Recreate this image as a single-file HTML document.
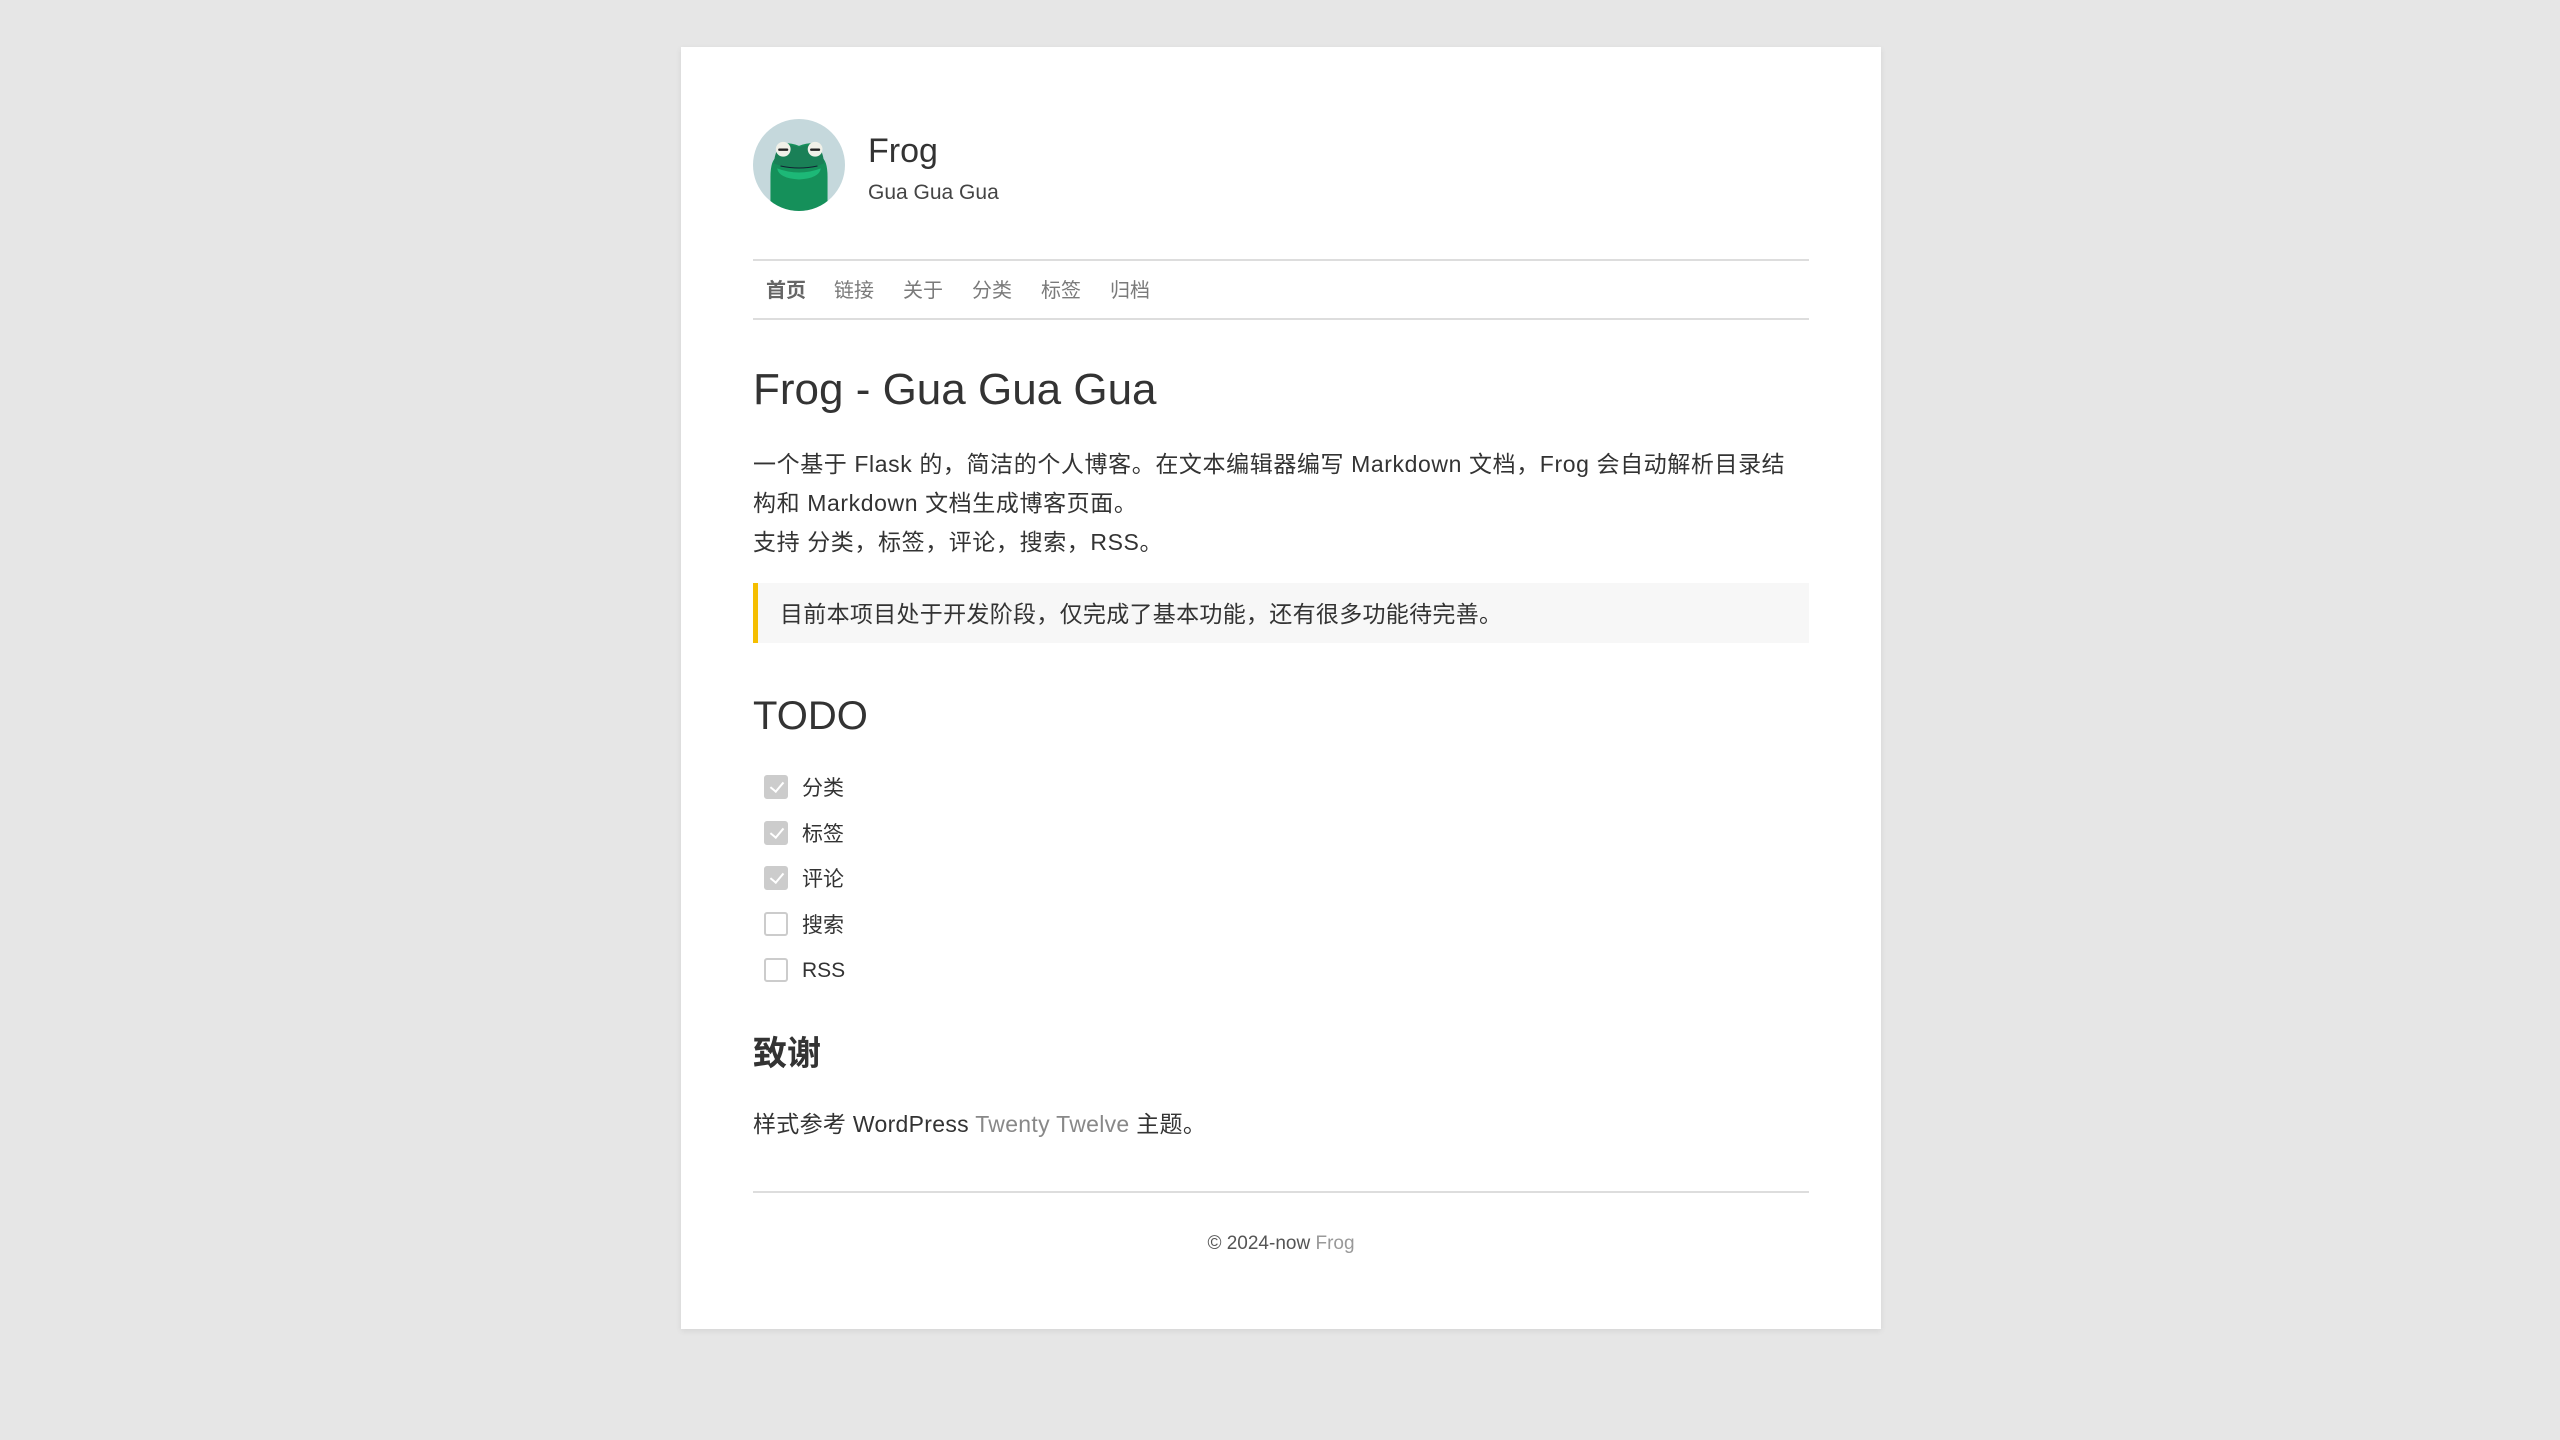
<!DOCTYPE html>
<html><head><meta charset="utf-8"><style>
html,body{margin:0;padding:0}
body{background:#e6e6e6;width:2560px;height:1440px;position:relative;font-family:"Liberation Sans","Noto Sans CJK SC",sans-serif;color:#333}
.card{position:absolute;left:681px;top:47px;width:1200px;height:1282px;background:#fff;box-shadow:0 2px 6px rgba(0,0,0,.08)}
.a{position:absolute;white-space:nowrap}
.nav span{position:absolute;top:0;font-size:20px;color:#7a7a7a}
.cb{position:absolute;left:83px;border:2px solid #ccc;border-radius:3px;box-sizing:border-box;width:24px;height:24px}
.cb.on{background:#ccc}
.cb.on::after{content:"";position:absolute;left:7px;top:2px;width:6px;height:11px;border:solid #fff;border-width:0 2px 2px 0;transform:rotate(40deg)}
.li{position:absolute;left:121px;font-size:21px}
</style></head><body>
<div class="card">
<svg class="a" style="left:72px;top:72px" width="92" height="92" viewBox="23 28 274 274">
<defs><clipPath id="c"><circle cx="160" cy="165" r="137"/></clipPath></defs>
<circle cx="160" cy="165" r="137" fill="#c5d8dc"/>
<g clip-path="url(#c)">
<path d="M75 310 L75 200 Q75 150 95 140 Q90 105 115 100 Q140 100 160 108 Q180 100 205 100 Q230 105 225 140 Q245 150 245 200 L245 310 Z" fill="#15905a"/>
<path d="M85 160 Q90 110 115 105 Q140 104 160 112 Q180 104 205 105 Q230 110 235 160 Q200 175 160 175 Q120 175 85 160Z" fill="#1a8057"/>
<path d="M95 175 Q160 200 225 175 Q220 205 160 208 Q100 205 95 175Z" fill="#1db877"/>
<path d="M105 168 Q160 180 215 168" stroke="#123" stroke-width="3" fill="none"/>
</g>
<circle cx="113" cy="118" r="22" fill="#f0f0e8"/><circle cx="208" cy="118" r="22" fill="#f0f0e8"/>
<rect x="98" y="116" width="30" height="7" rx="3" fill="#222"/><rect x="193" y="116" width="30" height="7" rx="3" fill="#222"/>
</svg>
<div class="a" style="left:187px;top:85px;font-size:34px;color:#333">Frog</div>
<div class="a" style="left:187px;top:134px;font-size:21px;color:#444">Gua Gua Gua</div>
<div class="a" style="left:72px;top:212px;width:1056px;height:57px;border-top:2px solid #ddd;border-bottom:2px solid #ddd"></div>
<div class="a nav" style="left:72px;top:227px;width:1056px;height:30px">
<span style="left:13px;color:#666;font-weight:bold">首页</span><span style="left:81px">链接</span><span style="left:150px">关于</span><span style="left:219px">分类</span><span style="left:288px">标签</span><span style="left:357px">归档</span></div>
<div class="a" style="left:72px;top:318px;font-size:44px;color:#333">Frog - Gua Gua Gua</div>
<div class="a" style="left:72px;top:398px;font-size:23px;line-height:39px;color:#333;letter-spacing:0.6px">一个基于 Flask 的，简洁的个人博客。在文本编辑器编写 Markdown 文档，Frog 会自动解析目录结<br>构和 Markdown 文档生成博客页面。<br>支持 分类，标签，评论，搜索，RSS。</div>
<div class="a" style="left:72px;top:536px;width:1056px;height:60px;background:#f7f7f7;border-left:5px solid #f5be00;box-sizing:border-box"></div>
<div class="a" style="left:99px;top:551px;font-size:23px;line-height:32px;letter-spacing:0.3px">目前本项目处于开发阶段，仅完成了基本功能，还有很多功能待完善。</div>
<div class="a" style="left:72px;top:647px;font-size:40px;color:#333">TODO</div>
<div class="cb on" style="top:728px"></div><div class="li" style="top:725px">分类</div>
<div class="cb on" style="top:774px"></div><div class="li" style="top:771px">标签</div>
<div class="cb on" style="top:819px"></div><div class="li" style="top:816px">评论</div>
<div class="cb" style="top:865px"></div><div class="li" style="top:862px">搜索</div>
<div class="cb" style="top:911px"></div><div class="li" style="top:912px">RSS</div>
<div class="a" style="left:72px;top:979px;font-size:34px;font-weight:bold;color:#333">致谢</div>
<div class="a" style="left:72px;top:1058px;font-size:23px;letter-spacing:0.3px">样式参考 WordPress <span style="color:#888">Twenty Twelve</span> 主题。</div>
<div class="a" style="left:72px;top:1144px;width:1056px;border-top:2px solid #ddd"></div>
<div class="a" style="left:0;width:1200px;text-align:center;top:1186px;font-size:19px;color:#555">© 2024-now <span style="color:#999">Frog</span></div>
</div>
</body></html>
